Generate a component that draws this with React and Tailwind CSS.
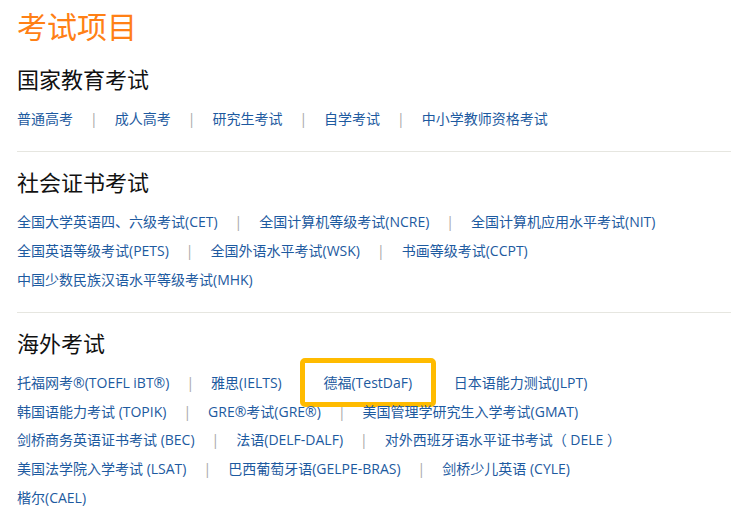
import React from 'react';

const sections = [
  {
    title: '国家教育考试',
    rows: [['普通高考', '成人高考', '研究生考试', '自学考试', '中小学教师资格考试']],
  },
  {
    title: '社会证书考试',
    rows: [
      ['全国大学英语四、六级考试(CET)', '全国计算机等级考试(NCRE)', '全国计算机应用水平考试(NIT)'],
      ['全国英语等级考试(PETS)', '全国外语水平考试(WSK)', '书画等级考试(CCPT)'],
      ['中国少数民族汉语水平等级考试(MHK)'],
    ],
  },
  {
    title: '海外考试',
    rows: [
      ['托福网考®(TOEFL iBT®)', '雅思(IELTS)', '德福(TestDaF)', '日本语能力测试(JLPT)'],
      ['韩国语能力考试 (TOPIK)', 'GRE®考试(GRE®)', '美国管理学研究生入学考试(GMAT)'],
      ['剑桥商务英语证书考试 (BEC)', '法语(DELF-DALF)', '对外西班牙语水平证书考试（ DELE ）'],
      ['美国法学院入学考试 (LSAT)', '巴西葡萄牙语(GELPE-BRAS)', '剑桥少儿英语 (CYLE)'],
      ['楷尔(CAEL)'],
    ],
  },
];

function LinkRow({ items }) {
  return (
    <div className="flex items-center h-[28.75px] text-[14px] whitespace-nowrap">
      {items.map((name, i) => (
        <React.Fragment key={name}>
          {i > 0 && <span className="px-[17px] text-[#a8a8a8]">|</span>}
          <a href="#" className="relative text-[#1d5aa0] hover:underline">
            {name}
            {/* highlight annotation around 德福 */}
            {name === '德福(TestDaF)' && (
              <span className="absolute left-[-23px] right-[-24px] top-[-14px] bottom-[-14px] border-[5px] border-[#ffbb00] rounded-[5px]" />
            )}
          </a>
        </React.Fragment>
      ))}
    </div>
  );
}

export default function App() {
  return (
    <div
      className="min-h-screen bg-white pl-[17px] pr-[8px] pt-[7px]"
      style={{ fontFamily: '"Open Sans", "Noto Sans CJK SC", sans-serif' }}
    >
      <h1 className="text-[30px] leading-[40px] text-[#ff8015] font-normal">考试项目</h1>

      {sections.map((section, idx) => (
        <section key={section.title} className={idx === 0 ? 'mt-[17px]' : 'mt-[15px]'}>
          <h2 className="text-[22px] leading-[30px] text-[#111] font-normal">{section.title}</h2>
          <div className="mt-[10px]">
            {section.rows.map((row, r) => (
              <LinkRow key={r} items={row} />
            ))}
          </div>
          {idx < sections.length - 1 && <div className="mt-[18.5px] border-t border-[#e6e6e0]" />}
        </section>
      ))}
    </div>
  );
}
